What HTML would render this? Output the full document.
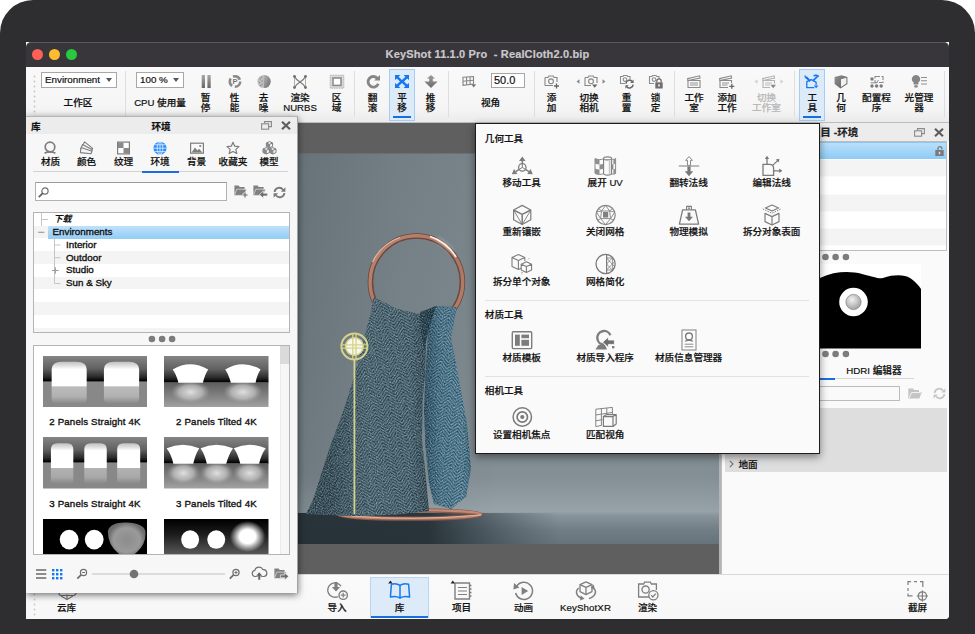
<!DOCTYPE html>
<html lang="zh-CN">
<head>
<meta charset="utf-8">
<title>KeyShot 11.1.0 Pro - RealCloth2.0.bip</title>
<style>
*{box-sizing:border-box;margin:0;padding:0}
html,body{width:975px;height:634px;overflow:hidden;background:#fff}
body{position:relative;font-family:"Liberation Sans","Noto Sans CJK SC",sans-serif;font-size:10px;color:#111;font-weight:500;-webkit-text-stroke:.2px}
.abs{position:absolute}
svg{overflow:visible}
#frame{position:absolute;left:0;top:0;width:975px;height:700px;background:#2e2e30;border-radius:33px 33px 0 0}
#screen{position:absolute;left:26px;top:42px;width:923px;height:577px;background:#fff;border-radius:0 0 4px 0;overflow:hidden}
#titlebar{position:absolute;left:0;top:0;width:923px;height:24.600px;z-index:2;background:#38353b;border-top:1px solid #5a575d;border-radius:5px 5px 0 0}
#titlebar .t{position:absolute;left:0;width:923px;top:5px;text-align:center;color:#c9c8cb;font-weight:700;font-size:11px;letter-spacing:.150px}
.tl{position:absolute;top:5.500px;width:11px;height:11px;border-radius:50%}
#toolbar{position:absolute;left:0;top:24px;width:923px;height:57px;background:linear-gradient(#f9f9f9,#f5f5f5 75%,#ebebeb);border-bottom:1px solid #bdbdbd}
.sep{position:absolute;top:5px;width:1px;height:46px;background:#dedede}
.tb{position:absolute;top:3px;height:52px;width:26px;margin-left:-13px;text-align:center;font-size:9.6px;line-height:10px;color:#111;border:1px solid transparent}
.tb .lab{position:absolute;left:-22px;right:-22px;top:23px;text-align:center;white-space:nowrap}
.tb .lab1{top:28px}
.tb svg{position:absolute;left:50%;top:5px;margin-left:-9px}
.tb.sel{background:#ddebf9;border:1px solid #a5ccf5}
.tb.sel:after{content:"";position:absolute;left:3px;right:3px;bottom:2px;height:2px;background:#1a6fe0}
.tb.dis{color:#b9b9b9}
.combo{position:absolute;top:6px;height:16px;border:1px solid #a8a8a8;background:#fff;font-size:9.8px;line-height:14px;padding-left:3px;white-space:nowrap;font-weight:400}
.combo:after{content:"";position:absolute;right:4px;top:5px;border:3.5px solid transparent;border-top:4px solid #555;border-bottom:0}
.tlab{position:absolute;top:31px;font-size:9.6px;line-height:12px;white-space:nowrap;transform:translateX(-50%)}
.bb{position:absolute;top:2px;height:41px;width:59px;margin-left:-29.500px;border:1px solid transparent;font-size:9.6px;line-height:12px}
.bb .lab{position:absolute;left:-10px;right:-10px;top:24.500px;text-align:center;white-space:nowrap}
.bb svg{position:absolute;left:50%;top:3.300px;margin-left:-12px}
.bb.sel{background:#ddebf9;border-color:#b7d6f5}
.bb.sel:after{content:"";position:absolute;left:0;right:0;bottom:-1px;height:2px;background:#1a6fe0}
.lt{position:absolute;top:39.200px;font-size:9.6px;line-height:12px;white-space:nowrap;transform:translateX(-50%)}
.li{position:absolute;top:24px}
.tr{position:absolute;left:1px;font-size:9.8px;line-height:12.7px;height:12.7px;white-space:nowrap;font-weight:400;color:#111;-webkit-text-stroke:.35px #111}
.th{position:absolute;width:104.5px;height:51.5px;overflow:hidden}
.tn{position:absolute;font-size:9.7px;line-height:12px;white-space:nowrap;transform:translateX(-50%);font-weight:400;letter-spacing:.15px;-webkit-text-stroke:.35px #111}
.ps{position:absolute;left:9.300px;font-size:9.600px;line-height:12px;white-space:nowrap}
.pl{position:absolute;font-size:9.600px;line-height:12px;white-space:nowrap;transform:translateX(-50%)}
.pi{position:absolute;margin-left:-12px}
.psep{position:absolute;left:9.300px;width:324px;height:1px;background:#e2e2e2}
</style>
</head>
<body>
<div id="frame"></div>
<div id="screen">
  <div id="titlebar">
    <div class="tl" style="left:6px;background:#fe5f57"></div>
    <div class="tl" style="left:23px;background:#febc2e"></div>
    <div class="tl" style="left:40px;background:#28c840"></div>
    <div class="t">KeyShot 11.1.0 Pro&nbsp; - RealCloth2.0.bip</div>
  </div>
  <div id="toolbar">
    <svg class="abs" style="left:7px;top:9px" width="3" height="38"><g fill="#c4c4c4"><circle cx="1.5" cy="1.5" r="0.9"/><circle cx="1.5" cy="6.5" r="0.9"/><circle cx="1.5" cy="11.5" r="0.9"/><circle cx="1.5" cy="16.5" r="0.9"/><circle cx="1.5" cy="21.5" r="0.9"/><circle cx="1.5" cy="26.5" r="0.9"/><circle cx="1.5" cy="31.5" r="0.9"/><circle cx="1.5" cy="36.5" r="0.9"/></g></svg>
    <div class="combo" style="left:15px;width:76px">Environment</div>
    <div class="tlab" style="left:52px">工作区</div>
    <div class="sep" style="left:99px"></div>
    <div class="combo" style="left:110px;width:48px">100 %</div>
    <div class="tlab" style="left:134px">CPU 使用量</div>

    <div class="tb" style="left:179.5px"><svg width="18" height="14" viewBox="0 0 18 14"><defs><linearGradient id="gv" x1="0" y1="0" x2="0" y2="1"><stop offset="0" stop-color="#a9a9a9"/><stop offset="1" stop-color="#666"/></linearGradient></defs><rect x="4.7" y="0" width="3.3" height="13" fill="url(#gv)"/><rect x="10.4" y="0" width="3.3" height="13" fill="url(#gv)"/></svg><div class="lab">暂<br>停</div></div>

    <div class="tb" style="left:208.5px"><svg width="18" height="14" viewBox="0 0 18 14"><circle cx="9" cy="6.5" r="5.2" fill="none" stroke="#8a8a8a" stroke-width="2.6" stroke-dasharray="8.200 2.700"/><text x="9" y="9.3" font-size="7.5" font-weight="700" fill="#777" text-anchor="middle" font-family="Liberation Sans,sans-serif">P</text></svg><div class="lab">性<br>能</div></div>

    <div class="tb" style="left:237.5px"><svg width="18" height="14" viewBox="0 0 18 14"><defs><linearGradient id="gd" x1="0" y1="0" x2="1" y2="1"><stop offset="0" stop-color="#b5b5b5"/><stop offset="1" stop-color="#6a6a6a"/></linearGradient></defs><circle cx="9" cy="6.5" r="6.6" fill="#bdbdbd"/><path d="M9 -0.1 A6.6 6.6 0 0 1 9 13.1 Z" fill="url(#gd)"/><g fill="#8c8c8c"><circle cx="5" cy="4" r=".7"/><circle cx="7" cy="6" r=".7"/><circle cx="4.5" cy="7.5" r=".7"/><circle cx="7" cy="9.5" r=".7"/><circle cx="6.5" cy="2.5" r=".7"/><circle cx="5.5" cy="10.5" r=".7"/></g></svg><div class="lab">去<br>噪</div></div>

    <div class="tb" style="left:274px"><svg width="18" height="14" viewBox="0 0 18 14"><g fill="none" stroke="#7d7d7d" stroke-width="1.3"><path d="M3.5 1.5 C6 7 12 7 14.5 12.5"/><path d="M14.5 1.5 C12 7 6 7 3.5 12.5"/><path d="M3.5 1.5 V12.5 M14.5 1.5 V12.5" stroke-width=".8" stroke="#9a9a9a"/></g><g fill="#6f6f6f"><circle cx="3.5" cy="1.5" r="1.4"/><circle cx="14.5" cy="1.5" r="1.4"/><circle cx="3.5" cy="12.5" r="1.4"/><circle cx="14.5" cy="12.5" r="1.4"/></g></svg><div class="lab">渲染<br>NURBS</div></div>

    <div class="tb" style="left:310.5px"><svg width="18" height="14" viewBox="0 0 18 14"><rect x="2.2" y=".2" width="13.6" height="13" fill="#d9d9d9" stroke="#b0b0b0" stroke-width="1" stroke-dasharray="1.5 1"/><rect x="5" y="3" width="8" height="7.4" fill="#fff" stroke="#8e8e8e" stroke-width="1.6"/></svg><div class="lab">区<br>域</div></div>

    <div class="sep" style="left:328px"></div>

    <div class="tb" style="left:346.5px"><svg width="18" height="14" viewBox="0 0 18 14"><path d="M13.6 3.6 A5.3 5.3 0 1 0 14.3 8.8" fill="none" stroke="#868686" stroke-width="2.8"/><path d="M10.2 5.6 L16 5.6 L16 0 Z" fill="#868686"/></svg><div class="lab">翻<br>滚</div></div>

    <div class="tb sel" style="left:376px"><svg width="18" height="14" viewBox="0 0 18 14"><g fill="#1577f2"><path d="M2 0 H7.4 L5.6 1.8 L9 5 L12.4 1.8 L10.6 0 H16 V5 L14.2 3.4 L11 6.5 L14.2 9.6 L16 8 V13 H10.6 L12.4 11.2 L9 8 L5.6 11.2 L7.4 13 H2 V8 L3.8 9.6 L7 6.5 L3.8 3.4 L2 5 Z"/></g></svg><div class="lab">平<br>移</div></div>

    <div class="tb" style="left:404.5px"><svg width="18" height="14" viewBox="0 0 18 14"><defs><linearGradient id="gdl" x1="0" y1="0" x2="0" y2="1"><stop offset="0" stop-color="#9d9d9d"/><stop offset="1" stop-color="#6c6c6c"/></linearGradient></defs><path d="M9 0 L13.2 3.6 H10.8 V6.6 H15.6 L9 13 L2.4 6.6 H7.2 V3.6 H4.8 Z" fill="url(#gdl)"/></svg><div class="lab">推<br>移</div></div>

    <div class="sep" style="left:422px"></div>

    <svg class="abs" style="left:436px;top:10px" width="15" height="12" viewBox="0 0 15 12"><g fill="none" stroke="#858585" stroke-width="1.1"><path d="M1 1.2 L11.5 .5 V8 L1 9.3 Z"/><path d="M4.6 1 V8.8 M8.1 .8 V8.4 M1 5.2 L11.5 4.2"/></g><path d="M9.2 8.2 H14.2 L11.7 11.4 Z" fill="#777"/></svg>
    <div class="abs" style="left:465px;top:7px;width:34px;height:15px;border:1px solid #a6a6a6;background:#fff;font-size:11px;line-height:13px;padding-left:2px;font-weight:400">50.0</div>
    <div class="tlab" style="left:464.5px">视角</div>

    <div class="sep" style="left:507.5px"></div>
    <div class="tb" style="left:525.5px"><svg width="18" height="14" viewBox="0 0 18 14"><g fill="none" stroke="#858585" stroke-width="1.1"><path d="M2 2.5 H5 L5.8 1 H10.2 L11 2.5 H14 V7 M10 10.5 H2 Z"/><path d="M2 2.5 V10.5"/><circle cx="8" cy="6.3" r="2.4"/><path d="M13.5 8.5 V13.5 M11 11 H16" stroke-width="1.3" stroke="#666"/></g></svg><div class="lab">添<br>加</div></div>

    <div class="tb" style="left:563px"><svg style="margin-left:-7px" width="18" height="14" viewBox="0 0 18 14"><g fill="none" stroke="#858585" stroke-width="1.1"><path d="M3 2.5 H6 L6.8 1 H11.2 L12 2.5 H15 V8 M9 10.5 H3 V2.5"/><circle cx="9" cy="6.3" r="2.4"/></g><path d="M10 9.5 H15.4 L12.7 12.8 Z" fill="#666"/><path d="M-5.5 6.5 L-2.5 4.3 V8.7 Z M23.5 6.5 L20.5 4.3 V8.7 Z" fill="#8a8a8a"/></svg><div class="lab">切换<br>相机</div></div>

    <div class="tb" style="left:600.5px"><svg width="18" height="14" viewBox="0 0 18 14"><g fill="none" stroke="#8c8c8c" stroke-width="1.1"><path d="M7 8.5 H2.5 V1.5 H5 L5.6 .5 H9 L9.6 1.5 H12 V4"/><circle cx="7" cy="4.6" r="1.8"/></g><g fill="none" stroke="#666" stroke-width="1.5"><path d="M7.9 8.6 A3.6 3.6 0 0 1 14.2 6.4"/><path d="M15.1 9.6 A3.6 3.6 0 0 1 8.8 11.8"/></g><path d="M15.6 4.6 V8 H12.2 Z M7.4 13.6 V10.2 H10.8 Z" fill="#666"/></svg><div class="lab">重<br>置</div></div>

    <div class="tb" style="left:629.5px"><svg width="18" height="14" viewBox="0 0 18 14"><g fill="none" stroke="#8c8c8c" stroke-width="1.1"><path d="M7 8.5 H2.5 V1.5 H5 L5.6 .5 H9 L9.6 1.5 H12 V4"/><circle cx="7" cy="4.6" r="1.8"/></g><rect x="8.3" y="7.3" width="7.4" height="6.2" fill="#6e6e6e"/><path d="M9.8 7.3 V6 A2.2 2.2 0 0 1 14.2 6 V7.3" fill="none" stroke="#6e6e6e" stroke-width="1.3"/><rect x="11.3" y="9.3" width="1.4" height="2.2" fill="#fff"/></svg><div class="lab">锁<br>定</div></div>

    <div class="sep" style="left:647.5px"></div>

    <div class="tb" style="left:668px"><svg width="18" height="14" viewBox="0 0 18 14"><g fill="none" stroke="#8a8a8a" stroke-width="1.1"><path d="M3 5.5 H15 V12.5 H3 Z"/><path d="M2.6 3.6 L14.6 .8 L15 3 L3 5.5 Z"/><path d="M5 8 H13 M5 10 H13" stroke-width=".9"/></g></svg><div class="lab">工作<br>室</div></div>

    <div class="tb" style="left:701px"><svg width="18" height="14" viewBox="0 0 18 14"><g fill="none" stroke="#8a8a8a" stroke-width="1.1"><path d="M13.5 8 V5.5 H2 V12.5 H10"/><path d="M1.6 3.6 L13.2 .8 L13.6 3 L2 5.5 Z"/><path d="M4 8 H11 M4 10 H9.5" stroke-width=".9"/><path d="M13.8 8.8 V13.8 M11.3 11.3 H16.3" stroke="#666" stroke-width="1.3"/></g></svg><div class="lab">添加<br>工作</div></div>

    <div class="tb dis" style="left:740.5px"><svg style="margin-left:-7px" width="18" height="14" viewBox="0 0 18 14"><g fill="none" stroke="#b3b3b3" stroke-width="1.1"><path d="M14.5 8.5 V5.5 H3 V12.5 H10"/><path d="M2.6 3.6 L14.2 .8 L14.6 3 L3 5.5 Z"/><path d="M5 8 H12 M5 10 H10" stroke-width=".9"/></g><path d="M10.4 9.8 H16 L13.2 13.2 Z" fill="#888"/><path d="M-5.5 6.5 L-2.5 4.3 V8.7 Z M23.5 6.5 L20.5 4.3 V8.7 Z" fill="#d0d0d0"/></svg><div class="lab">切换<br>工作室</div></div>

    <div class="sep" style="left:767.5px"></div>

    <div class="tb sel" style="left:786.2px"><svg width="18" height="14" viewBox="0 0 18 14"><g fill="none" stroke="#1577f2" stroke-width="1.300" stroke-linejoin="round"><path d="M3.800 12.700 V6.600 L8.200 4.700 L13.100 7.200 V10"/><path d="M3.200 12.700 H11.300"/><path d="M3 2 L7.200 6.200" stroke-width="2"/><path d="M2 .400 L2.400 2.600 L4.600 2.800" stroke-width="1.200"/><path d="M14.300 1.600 L10 5.600" stroke-width="1.700"/><path d="M10.600 .800 Q13.500 -.300 15.800 1.600" stroke-width="1.700"/></g><path d="M10.800 10.400 H15.500 L13.100 13.200 Z" fill="#1577f2"/></svg><div class="lab">工<br>具</div></div>

    <div class="tb" style="left:815px"><svg width="18" height="14" viewBox="0 0 18 14"><defs><linearGradient id="gg" x1="0" y1="0" x2="1" y2="1"><stop offset="0" stop-color="#8f8f8f"/><stop offset="1" stop-color="#5f5f5f"/></linearGradient></defs><path d="M2.6 2 L9.5 .2 L15.4 2 V9 L8.5 13.5 L2.6 9 Z" fill="url(#gg)"/><path d="M9 4.2 L14.4 2.8 V8.6 L9 12 Z" fill="#f2f2f2"/></svg><div class="lab">几<br>何</div></div>

    <div class="tb" style="left:850.5px"><svg width="18" height="14" viewBox="0 0 18 14"><g fill="#7b7b7b"><circle cx="4" cy="4" r="1.7"/><circle cx="4" cy="11" r="1.7"/><circle cx="8.6" cy="11" r="1.7"/><circle cx="13.2" cy="11" r="1.7"/></g><g fill="none" stroke="#8a8a8a" stroke-width="1.1"><path d="M7 1.5 H15 V7.5 H7 Z" stroke-dasharray="5 1.5"/><path d="M2.5 7.8 H8.5 L10.5 5" stroke-width="1"/></g></svg><div class="lab">配置程<br>序</div></div>

    <div class="tb" style="left:893px"><svg width="18" height="14" viewBox="0 0 18 14"><path d="M6 0 A4 4 0 0 1 8.4 7.3 V9.4 H3.6 V7.3 A4 4 0 0 1 6 0 Z" fill="#858585"/><rect x="4.2" y="10.2" width="3.6" height="2.4" rx=".8" fill="#858585"/><path d="M11 2.5 H17 M11 5.8 H17 M11 9 H17" stroke="#8e8e8e" stroke-width="1.1"/></svg><div class="lab">光管理<br>器</div></div>
    <div class="sep" style="left:918px"></div>
  </div>
  <svg id="viewport" class="abs" style="left:272px;top:81px" width="424" height="451" viewBox="298 123 424 451">
    <defs>
      <linearGradient id="bgsky" x1="0" y1="153" x2="0" y2="512" gradientUnits="userSpaceOnUse"><stop offset="0" stop-color="#79858b"/><stop offset=".55" stop-color="#7d898f"/><stop offset=".9" stop-color="#838f95"/><stop offset="1" stop-color="#98a3a8"/></linearGradient>
      <linearGradient id="floorv" x1="0" y1="510" x2="0" y2="544" gradientUnits="userSpaceOnUse"><stop offset="0" stop-color="#9ca7ac"/><stop offset=".18" stop-color="#87939a"/><stop offset=".6" stop-color="#717d84"/><stop offset="1" stop-color="#67737a"/></linearGradient>
      <linearGradient id="floorh" x1="298" y1="0" x2="560" y2="0" gradientUnits="userSpaceOnUse"><stop offset="0" stop-color="#1c272e" stop-opacity=".95"/><stop offset=".5" stop-color="#1f2a31" stop-opacity=".9"/><stop offset=".75" stop-color="#2a363d" stop-opacity=".45"/><stop offset="1" stop-color="#3a464d" stop-opacity="0"/></linearGradient>
      <pattern id="hb" width="16" height="3.4" patternUnits="userSpaceOnUse" patternTransform="rotate(-14)"><rect width="16" height="3.4" fill="#1d3541"/><path d="M0 8 L8 0 M0 11.4 L8 3.4 M0 4.6 L8 -3.4 M0 1.2 L8 -6.8 M8 0 L16 8 M8 -3.4 L16 4.6 M8 3.4 L16 11.4 M8 -6.8 L16 1.2" stroke="#75909a" stroke-width="1.2" fill="none"/></pattern>
      <pattern id="hb2" width="14" height="3.4" patternUnits="userSpaceOnUse" patternTransform="rotate(10)"><rect width="14" height="3.4" fill="#1b4a63"/><path d="M0 7 L7 0 M0 10.4 L7 3.4 M0 3.6 L7 -3.4 M0 .2 L7 -6.8 M7 0 L14 7 M7 -3.4 L14 3.6 M7 3.4 L14 10.4 M7 -6.8 L14 .2" stroke="#80a5b6" stroke-width="1.15" fill="none"/></pattern>
      <linearGradient id="shl" x1="330" y1="0" x2="430" y2="0" gradientUnits="userSpaceOnUse"><stop offset="0" stop-color="#0d1a22" stop-opacity=".45"/><stop offset=".4" stop-color="#3a4a52" stop-opacity=".18"/><stop offset=".8" stop-color="#0d1a22" stop-opacity=".1"/><stop offset="1" stop-color="#07141c" stop-opacity=".5"/></linearGradient>
      <linearGradient id="shr" x1="425" y1="0" x2="472" y2="0" gradientUnits="userSpaceOnUse"><stop offset="0" stop-color="#06202e" stop-opacity=".55"/><stop offset=".35" stop-color="#0c3045" stop-opacity=".1"/><stop offset=".8" stop-color="#0c3045" stop-opacity="0"/><stop offset="1" stop-color="#06202e" stop-opacity=".35"/></linearGradient>
      <linearGradient id="copper" x1="0" y1="0" x2="1" y2="1"><stop offset="0" stop-color="#bb8975"/><stop offset=".5" stop-color="#a87563"/><stop offset="1" stop-color="#b5806d"/></linearGradient>
      <filter id="noise" x="0" y="0" width="100%" height="100%"><feTurbulence type="fractalNoise" baseFrequency="0.85" numOctaves="2" seed="3" result="t"/><feColorMatrix type="matrix" values="0 0 0 0 .75  0 0 0 0 .85  0 0 0 0 .9  1.6 0 0 0 -.62"/></filter>
      <filter id="noised" x="0" y="0" width="100%" height="100%"><feTurbulence type="fractalNoise" baseFrequency="0.9" numOctaves="2" seed="8"/><feColorMatrix type="matrix" values="0 0 0 0 .03  0 0 0 0 .08  0 0 0 0 .12  0 1.8 0 0 -.7"/></filter>
      <clipPath id="clothclip"><path d="M373.5 297 L397 309 L420 314 L436 306 L430 322 L426 340 L425 374 L422.500 400 L422 440 L425.5 475 L429 511 L392 515 L352 516 L306 514 L313 500 L330 447 L343 412 L352 384 L366 331 L371 311 Z"/><path d="M429 320 L436 306 L457 307 L454 322 L451 338 L458 374 L467 424 L471 468 L466 497 L451 509 L434 504 L429 483 L425.5 446 L424 410 L425.5 374 Z"/></clipPath>
      <filter id="glow" x="-50%" y="-50%" width="200%" height="200%"><feGaussianBlur stdDeviation="2"/></filter>
      <linearGradient id="vig" x1="298" y1="0" x2="498" y2="0" gradientUnits="userSpaceOnUse"><stop offset="0" stop-color="#39444a" stop-opacity=".28"/><stop offset=".5" stop-color="#39444a" stop-opacity=".1"/><stop offset="1" stop-color="#39444a" stop-opacity="0"/></linearGradient>
      <clipPath id="imgclip"><rect x="298" y="153.5" width="422" height="390.5"/></clipPath>
    </defs>
    <rect x="298" y="123" width="424" height="451" fill="#5f5f5f"/>
    <g clip-path="url(#imgclip)">
      <rect x="298" y="153" width="422" height="360" fill="url(#bgsky)"/>
      <rect x="298" y="511" width="422" height="34" fill="url(#floorv)"/>
      <rect x="298" y="513" width="422" height="32" fill="url(#floorh)"/>
      <rect x="298" y="153" width="200" height="392" fill="url(#vig)"/>
      <!-- ring -->
      <circle cx="416.400" cy="282" r="46" fill="none" stroke="#6f4538" stroke-width="5.600"/>
      <circle cx="416.400" cy="282" r="46.300" fill="none" stroke="url(#copper)" stroke-width="3.400"/>
      <path d="M372.500 262 A46.800 46.800 0 0 1 400 237.500" fill="none" stroke="#e9c6b6" stroke-width="1.300" opacity=".85"/>
      <path d="M430 236.500 A47.500 47.500 0 0 1 456 257" fill="none" stroke="#fff3ec" stroke-width="1.800" opacity=".95"/>
      <path d="M436 239 A47 47 0 0 1 452 252" fill="none" stroke="#fff" stroke-width="4" opacity=".35" filter="url(#glow)"/>
      <!-- base ring -->
      <ellipse cx="410" cy="514.500" rx="71" ry="4.200" fill="none" stroke="#8a5645" stroke-width="4.200"/><ellipse cx="410" cy="514.300" rx="71" ry="4.200" fill="none" stroke="#c08a76" stroke-width="2.200"/>
      <path d="M352 516 Q410 521 481 515" fill="none" stroke="#e7c2b2" stroke-width="1" opacity=".8"/>
      <!-- right drape -->
      <path d="M429 320 L436 306 L457 307 L454 322 L451 338 L458 374 L467 424 L471 468 L466 497 L451 509 L434 504 L429 483 L425.5 446 L424 410 L425.5 374 Z" fill="url(#hb2)"/>
      <path d="M429 320 L436 306 L457 307 L454 322 L451 338 L458 374 L467 424 L471 468 L466 497 L451 509 L434 504 L429 483 L425.5 446 L424 410 L425.5 374 Z" fill="url(#shr)"/>
      <!-- left drape -->
      <path d="M373.5 297 L397 309 L420 314 L436 306 L430 322 L426 340 L425 374 L422.500 400 L422 440 L425.5 475 L429 511 L392 515 L352 516 L306 514 L313 500 L330 447 L343 412 L352 384 L366 331 L371 311 Z" fill="url(#hb)"/>
      <path d="M373.5 297 L397 309 L420 314 L436 306 L430 322 L426 340 L425 374 L422.500 400 L422 440 L425.5 475 L429 511 L392 515 L352 516 L306 514 L313 500 L330 447 L343 412 L352 384 L366 331 L371 311 Z" fill="url(#shl)"/>
      <path d="M420 312 L436 306 L430 326 L424 350 L421 330 Z" fill="#0a2230" opacity=".55"/>
      <g clip-path="url(#clothclip)"><rect x="300" y="295" width="180" height="225" filter="url(#noise)" opacity=".55"/><rect x="300" y="295" width="180" height="225" filter="url(#noised)" opacity=".6"/></g>
      <!-- floor reflection -->
      
      <!-- gizmo -->
      <g stroke="#d5d38a" fill="none">
        <path d="M354.400 359 V514" stroke-width="1.800"/>
        <circle cx="354.400" cy="346.500" r="13" stroke-width="2"/>
        <circle cx="354.400" cy="346.500" r="8.800" fill="#f7f7ec" stroke-width="1.600"/>
        <path d="M352.800 333 V360 M356 333 V360 M341 344.900 H368 M341 348.100 H368" stroke-width="1.300"/>
      </g>
    </g>
    <rect x="719" y="123" width="3" height="451" fill="#b4b4b4"/>
  </svg>
  <div id="rightpanel" class="abs" style="left:695px;top:81px;width:228px;height:451px;background:#fafafa">
    <div class="abs" style="left:0;top:0;width:228px;height:18px;background:#ececec"></div><div class="abs" style="left:0;top:0;width:1px;height:451px;background:#bdbdbd"></div>
    <div class="abs" style="left:0;top:3px;width:226px;text-align:center;font-size:10.5px;line-height:13px;font-weight:700;color:#222">项目 -环境</div>
    <svg class="abs" style="left:193px;top:4.5px" width="11" height="9" viewBox="0 0 11 9"><g fill="none" stroke="#8a8a8a" stroke-width="1.1"><path d="M3.5 2.5 V.6 H10.4 V5.6 H8"/><rect x=".6" y="2.8" width="7" height="5.4" fill="#ececec"/></g></svg>
    <svg class="abs" style="left:212.5px;top:4.5px" width="10" height="9" viewBox="0 0 10 9"><path d="M1 .8 L9 8.2 M9 .8 L1 8.2" stroke="#5d5d5d" stroke-width="2.2"/></svg>
    <div class="abs" style="left:0;top:18px;width:226px;height:110px;border:1px solid #bdbdbd;background:repeating-linear-gradient(#fff 0,#fff 17.2px,#f4f4f4 17.2px,#f4f4f4 34.4px);background-position:0 0.5px"></div>
    <div class="abs" style="left:1px;top:19px;width:224px;height:17px;background:linear-gradient(#b9dffa,#8ecbf6);border-top:1px solid #8fc4ee"></div>
    <svg class="abs" style="left:214px;top:22.5px" width="9" height="10" viewBox="0 0 9 10"><rect x=".3" y="4" width="8.4" height="6" fill="#7a7a7a"/><path d="M3 4 V2.6 A1.9 1.9 0 0 1 6.8 2.6 V3.2" fill="none" stroke="#7a7a7a" stroke-width="1.3"/><rect x="3.8" y="5.8" width="1.4" height="2.4" fill="#d8e9f6"/></svg>
    <svg class="abs" style="left:100px;top:130px" width="30" height="8" viewBox="0 0 30 8"><g fill="#7c7c7c"><circle cx="4.5" cy="4" r="3.3"/><circle cx="14.6" cy="4" r="3.3"/><circle cx="24.9" cy="4" r="3.3"/></g></svg>
    <svg class="abs" style="left:28.5px;top:140.5px" width="171" height="84.5" viewBox="0 0 171 84.5"><rect width="171" height="84.5" fill="#fff"/><path d="M0 16 C20 14 50 16 70 14 C85 7 100 7 112 10 C125 13 128 15 133 14 C145 10 155 11 160 14 C166 18 169 22 171 25 V84.5 H0 Z" fill="#000"/><circle cx="103.5" cy="38" r="14.3" fill="#fff"/><defs><radialGradient id="pin" cx=".4" cy=".35" r=".7"><stop offset="0" stop-color="#f2f2f2"/><stop offset="1" stop-color="#9c9c9c"/></radialGradient></defs><circle cx="103.5" cy="38" r="7.6" fill="url(#pin)" stroke="#8a8a8a" stroke-width=".8"/></svg>
    <svg class="abs" style="left:100px;top:227px" width="30" height="8" viewBox="0 0 30 8"><g fill="#7c7c7c"><circle cx="4.5" cy="4" r="3.3"/><circle cx="14.6" cy="4" r="3.3"/><circle cx="24.9" cy="4" r="3.3"/></g></svg>
    <div class="abs" style="left:36px;top:255px;width:156.5px;height:1px;background:#d6d6d6"></div>
    <div class="abs" style="left:36px;top:254.5px;width:78px;height:2px;background:#1a6fe0"></div>
    <div class="abs" style="left:61px;top:240px;font-size:10.5px;line-height:13px;white-space:nowrap;transform:translateX(-50%)">设置</div>
    <div class="abs" style="left:153px;top:240.500px;font-size:9.700px;line-height:13px;white-space:nowrap;transform:translateX(-50%)">HDRI 编辑器</div>
    <div class="abs" style="left:8px;top:262.5px;width:170.5px;height:15px;border:1px solid #bcbcbc;background:#fafafa"></div>
    <svg class="abs" style="left:187px;top:264.5px" width="14" height="11" viewBox="0 0 14 11"><path d="M.3 10.6 V.6 H5 L6.2 2 H11 V4 H13.8 L11.4 10.6 Z" fill="#c4c4c4"/><path d="M1.3 10 L3.4 4.6 H12.8" fill="none" stroke="#f8f8f8" stroke-width=".9"/></svg>
    <svg class="abs" style="left:211.5px;top:264.5px" width="13" height="11" viewBox="0 0 13 11"><g fill="none" stroke="#c6c6c6" stroke-width="1.7"><path d="M1.6 5 A4.6 4.6 0 0 1 10 2.8"/><path d="M11.4 6 A4.6 4.6 0 0 1 3 8.2"/></g><path d="M12.4 .4 V4.6 H8.2 Z M.6 10.6 V6.4 H4.8 Z" fill="#c6c6c6"/></svg>
    <div class="abs" style="left:3.500px;top:285px;width:222.500px;height:64px;background:#dedede"></div>
    <svg class="abs" style="left:8px;top:337px" width="5" height="8" viewBox="0 0 5 8"><path d="M.8 .8 L4 4 L.8 7.2" fill="none" stroke="#777" stroke-width="1.2"/></svg>
    <div class="abs" style="left:17.500px;top:334.500px;font-size:9.600px;line-height:13px;white-space:nowrap">地面</div>
  </div>
  <div id="bottombar" class="abs" style="left:0;top:531.500px;width:923px;height:45.500px;background:linear-gradient(#fafafa,#f7f7f7);border-top:1px solid #d9d9d9">
    <svg class="abs" style="left:7px;top:8px" width="3" height="33"><g fill="#c9c9c9"><circle cx="1.5" cy="1.5" r=".9"/><circle cx="1.5" cy="6.5" r=".9"/><circle cx="1.5" cy="11.5" r=".9"/><circle cx="1.5" cy="16.5" r=".9"/><circle cx="1.5" cy="21.5" r=".9"/><circle cx="1.5" cy="26.5" r=".9"/><circle cx="1.5" cy="31.5" r=".9"/></g></svg>
    <div class="bb" style="left:40.5px"><svg width="24" height="20" viewBox="0 0 24 20"><g fill="none" stroke="#7a7a7a" stroke-width="1.2"><path d="M6 9 A5 5 0 0 1 15 7 A4 4 0 0 1 19 14.5 H5.5 A3 3 0 0 1 6 9 Z"/><path d="M6 15 L12 18.5 L18 15 M12 18.5 V13.5"/></g></svg><div class="lab">云库</div></div>
    <div class="bb" style="left:311px"><svg width="24" height="20" viewBox="0 0 24 20"><g fill="none" stroke="#7f7f7f" stroke-width="1.4"><path d="M16 5.2 A7.2 7.2 0 1 0 13 15.6"/><circle cx="18.2" cy="14.2" r="4.2" fill="#f8f8f8"/><path d="M18.2 11.8 V16.6 M15.8 14.2 H20.6" stroke-width="1.2"/></g><path d="M9.4 1 H12.6 V6 H15.2 L11 10.4 L6.8 6 H9.4 Z" fill="#7f7f7f"/></svg><div class="lab">导入</div></div>
    <div class="bb sel" style="left:373.5px"><svg width="24" height="20" viewBox="0 0 24 20"><g fill="none" stroke="#1577f2" stroke-width="1.5" stroke-linejoin="round"><path d="M12 4.4 C9.5 2.6 6 2.4 3.4 3.2 L2.4 16 C5.6 15.2 9.4 15.4 12 17 C14.6 15.4 18.4 15.2 21.6 16 L20.6 3.2 C18 2.4 14.5 2.6 12 4.4 Z"/><path d="M12 4.4 V17"/></g><path d="M.2 2.4 L2.4 -.4 L4.6 2.4 Z" fill="#222"/></svg><div class="lab">库</div></div>
    <div class="bb" style="left:435.5px"><svg width="24" height="20" viewBox="0 0 24 20"><g fill="none" stroke="#7f7f7f" stroke-width="1.4"><path d="M5 2 H19.5 V18 H5 Z"/><path d="M8 6.5 H17 M8 10 H17 M8 13.5 H17" stroke-width="1.2"/><path d="M19.5 4.5 H21.5 M19.5 8 H21.5 M19.5 11.5 H21.5 M19.5 15 H21.5" stroke-width="1.6"/></g><path d="M.6 2.4 L2.8 -.4 L5 2.4 Z" fill="#222"/></svg><div class="lab">项目</div></div>
    <div class="bb" style="left:497.5px"><svg width="24" height="20" viewBox="0 0 24 20"><g fill="none" stroke="#7f7f7f" stroke-width="1.5"><path d="M4.6 5.4 A8.6 8.6 0 1 1 3.6 12"/></g><path d="M2 2 L7.4 6.6 L1.4 8.6 Z" fill="#7f7f7f"/><path d="M9.6 6 L16.2 10 L9.6 14 Z" fill="#7f7f7f"/></svg><div class="lab">动画</div></div>
    <div class="bb" style="left:559.5px"><svg width="24" height="20" viewBox="0 0 24 20"><g fill="none" stroke="#7f7f7f" stroke-width="1.3" stroke-linejoin="round"><path d="M12 .8 L18 3.6 V10.6 L12 13.6 L6 10.6 V3.6 Z"/><path d="M6 3.6 L12 6.4 L18 3.6 M12 6.4 V13.6"/><path d="M4.6 7 C1 10 2 15.4 8 17.4" stroke-width="1.5"/><path d="M19.4 7 C23 10 22 15.4 15 17.6" stroke-width="1.5"/></g><path d="M6 19.6 L10.6 17.8 L6.8 14.4 Z M19.8 3.6 L20.8 8.6 L16.6 7 Z" fill="#7f7f7f"/></svg><div class="lab" style="font-size:9.700px;letter-spacing:.100px">KeyShotXR</div></div>
    <div class="bb" style="left:621.5px"><svg width="24" height="20" viewBox="0 0 24 20"><g fill="none" stroke="#7f7f7f" stroke-width="1.3"><path d="M14 16 H2.6 V3 H7.6 L8.6 1.2 H14.4 L15.4 3 H20.4 V9"/><circle cx="9.6" cy="8.6" r="3.6"/><circle cx="17.4" cy="14.2" r="4.6" fill="#f8f8f8"/><path d="M15.2 14.2 L16.8 16 L19.8 12.6" stroke-width="1.2"/></g></svg><div class="lab">渲染</div></div>
    <div class="bb" style="left:891.5px"><svg style="top:2px" width="24" height="20" viewBox="0 0 24 20"><g fill="none" stroke="#7f7f7f" stroke-width="1.2"><path d="M2 5 V1.6 H5 M8 1.6 H11 M14 1.6 H16.8 V7 M2 8 V11 M2 13.6 V15.8 H6.5"/><circle cx="16.4" cy="16" r="4.2"/><path d="M16.4 10.4 V21.4 M10.8 16 H22"/></g></svg><div class="lab">截屏</div></div>
  </div>
  <div id="library" class="abs" style="left:0;top:74px;width:272px;height:476.500px;background:#f7f7f7;box-shadow:0 2px 7px rgba(0,0,0,.55);border-right:1px solid #a2a2a2;border-top:1px solid #b5b5b5">
    <div class="abs" style="left:0;top:0;width:271px;height:17px;background:#ececec"></div>
    <div class="abs" style="left:5px;top:3px;font-size:9.6px;line-height:13px;font-weight:700">库</div>
    <div class="abs" style="left:135px;top:3px;font-size:9.6px;line-height:13px;font-weight:700;transform:translateX(-50%)">环境</div>
    <svg class="abs" style="left:235px;top:4px" width="11" height="9" viewBox="0 0 11 9"><g fill="none" stroke="#8a8a8a" stroke-width="1.1"><path d="M3.5 2.5 V.6 H10.4 V5.6 H8"/><rect x=".6" y="2.8" width="7" height="5.4" fill="#ececec"/></g></svg>
    <svg class="abs" style="left:254.5px;top:4px" width="10" height="9" viewBox="0 0 10 9"><path d="M1 .8 L9 8.2 M9 .8 L1 8.2" stroke="#5d5d5d" stroke-width="2.2"/></svg>
    <!-- tabs -->
    <svg class="li" style="left:17px" width="14" height="14" viewBox="0 0 14 14"><circle cx="7" cy="6" r="4.8" fill="none" stroke="#7d7d7d" stroke-width="1.7"/><path d="M1.6 12.2 C4 10.6 10 10.6 12.4 12.2" fill="none" stroke="#7d7d7d" stroke-width="1.7"/></svg>
    <div class="lt" style="left:24.5px">材质</div>
    <svg class="li" style="left:53px" width="15" height="14" viewBox="0 0 15 14"><g fill="#f4f4f4" stroke="#7d7d7d" stroke-width="1.1" stroke-linejoin="round"><path d="M5.6 .8 L13.6 7.4 L11 10.6 L2 7.8 Z"/><path d="M3.4 3.6 L13.4 8.8 L11.4 11.6 L1.6 9.6 Z"/><path d="M2 6.6 L13 10.2 L12 12.8 L1.4 11.6 Z"/></g></svg>
    <div class="lt" style="left:60.5px">颜色</div>
    <svg class="li" style="left:91px" width="13" height="14" viewBox="0 0 13 14"><rect x=".6" y="1.1" width="11.8" height="11.8" fill="#fff" stroke="#7d7d7d" stroke-width="1.2"/><rect x="1" y="1.5" width="5.5" height="5.5" fill="#8a8a8a"/><rect x="6.5" y="7" width="5.5" height="5.5" fill="#8a8a8a"/></svg>
    <div class="lt" style="left:97.5px">纹理</div>
    <svg class="li" style="left:126.5px" width="14" height="14" viewBox="0 0 14 14"><circle cx="7" cy="7.2" r="6.5" fill="#2b8cfb"/><g fill="none" stroke="#eaf3ff" stroke-width=".8"><ellipse cx="7" cy="7.2" rx="2.8" ry="6.5"/><path d="M7 .7 V13.7 M.5 7.2 H13.5 M1.5 3.8 H12.5 M1.5 10.6 H12.5"/></g></svg>
    <div class="lt" style="left:134px">环境</div>
    <svg class="li" style="left:163.5px" width="14" height="14" viewBox="0 0 14 14"><rect x=".6" y="2.2" width="12.8" height="10" fill="#fafafa" stroke="#7d7d7d" stroke-width="1.2"/><path d="M1.6 11.4 L5 6.4 L7.4 9.4 L9 7.8 L12.4 11.4 Z" fill="#7d7d7d"/><circle cx="10.2" cy="5" r="1.1" fill="#7d7d7d"/></svg>
    <div class="lt" style="left:170.5px">背景</div>
    <svg class="li" style="left:200px" width="14" height="14" viewBox="0 0 14 14"><path d="M7 1.2 L8.7 5.2 L13 5.6 L9.8 8.4 L10.8 12.6 L7 10.4 L3.2 12.6 L4.2 8.4 L1 5.6 L5.3 5.2 Z" fill="none" stroke="#7d7d7d" stroke-width="1.2" stroke-linejoin="round"/></svg>
    <div class="lt" style="left:207px">收藏夹</div>
    <svg class="li" style="left:236px" width="15" height="14" viewBox="0 0 15 14"><g fill="#f4f4f4" stroke="#7d7d7d" stroke-width="1" stroke-linejoin="round"><path d="M7.5 .6 L10.6 2 V5.4 L7.5 6.8 L4.4 5.4 V2 Z M4.4 2 L7.5 3.4 L10.6 2 M7.5 3.4 V6.8"/><path d="M4.2 6.6 L7.4 8 V11.6 L4.2 13 L1 11.6 V8 Z M1 8 L4.2 9.4 L7.4 8 M4.2 9.4 V13"/><path d="M10.8 6.6 L14 8 V11.6 L10.8 13 L7.6 11.6 V8 Z M7.6 8 L10.8 9.4 L14 8 M10.8 9.4 V13"/></g><path d="M4.4 2 L7.5 3.4 V6.8 L4.4 5.4 Z M1 8 L4.2 9.4 V13 L1 11.6 Z M7.6 8 L10.8 9.4 V13 L7.6 11.6 Z" fill="#8a8a8a"/></svg>
    <div class="lt" style="left:243px">模型</div>
    <div class="abs" style="left:6.5px;top:54px;width:255.5px;height:1px;background:#d2d2d2"></div>
    <div class="abs" style="left:116px;top:53.5px;width:36.6px;height:2px;background:#1a6fe0"></div>
    <!-- search -->
    <div class="abs" style="left:9px;top:65px;width:192px;height:19px;border:1px solid #b1b1b1;border-top-color:#9a9a9a;background:#fff"></div>
    <svg class="abs" style="left:12px;top:69.5px" width="11" height="11" viewBox="0 0 11 11"><circle cx="7" cy="4" r="3.1" fill="none" stroke="#707070" stroke-width="1.2"/><path d="M4.8 6.2 L.8 10.2" stroke="#606060" stroke-width="1.8"/></svg>
    <svg class="abs" style="left:208px;top:68px" width="14" height="13" viewBox="0 0 14 13"><path d="M.4 10.4 V.6 H4.6 L5.8 2 H10.6 V4" fill="#808080"/><path d="M.4 10.4 L2.8 4.2 H12.6 L10 10.4 Z" fill="#808080" stroke="#f4f4f4" stroke-width=".6"/><path d="M11 7.2 V12.8 M8.2 10 H13.8" stroke="#f4f4f4" stroke-width="2.6"/><path d="M11 7.6 V12.6 M8.6 10 H13.6" stroke="#6d6d6d" stroke-width="1.2"/></svg>
    <svg class="abs" style="left:227px;top:68px" width="15" height="13" viewBox="0 0 15 13"><path d="M.4 10.4 V.6 H4.6 L5.8 2 H10.6 V4" fill="#808080"/><path d="M.4 10.4 L2.8 4.2 H12.6 L10 10.4 Z" fill="#808080" stroke="#f4f4f4" stroke-width=".6"/><path d="M6.4 9.6 L10.4 6 V8.2 H14.6 V11 H10.4 V13.2 Z" fill="#6d6d6d" stroke="#f4f4f4" stroke-width=".7"/></svg>
    <svg class="abs" style="left:247px;top:69.5px" width="13" height="11" viewBox="0 0 13 11"><g fill="none" stroke="#7a7a7a" stroke-width="1.8"><path d="M1.6 5 A4.6 4.6 0 0 1 10 2.8"/><path d="M11.4 6 A4.6 4.6 0 0 1 3 8.2"/></g><path d="M12.4 .2 V4.8 H7.8 Z M.6 10.8 V6.2 H5.2 Z" fill="#7a7a7a"/></svg>
    <!-- tree -->
    <div class="abs" style="left:7px;top:95px;width:257px;height:121px;border:1px solid #b4b4b4;background:#fff">
      <div class="abs" style="left:0;top:0;width:255px;height:119px;background:repeating-linear-gradient(#fff 0,#fff 12.750px,#f4f4f4 12.750px,#f4f4f4 25.500px);background-position:0 0"></div>
      <div class="abs" style="left:14px;top:12.800px;width:241px;height:12.800px;background:linear-gradient(#bfe1fa,#93cdf6)"></div>
      <svg class="abs" style="left:0;top:0" width="60" height="90" viewBox="34 213 60 90"><g stroke="#c6c6c6" stroke-width="1" fill="none"><path d="M41.500 213 V226 M41.500 219.500 H48"/><path d="M54.500 238.500 V283.500 H60.500 M54.500 245 H60.500 M54.500 257.700 H60.500"/><path d="M38.200 232.300 H44.400" stroke="#8c8c8c" stroke-width="1.100"/><path d="M52 270.500 H58.600 M55.300 267.200 V273.800" stroke="#999" stroke-width="1.100"/></g></svg>
      <div class="tr" style="left:19.500px;top:.300px;font-weight:700;font-style:italic;font-size:9px;-webkit-text-stroke:0">下载</div>
      <div class="tr" style="left:18.5px;top:13px">Environments</div>
      <div class="tr" style="left:32px;top:25.800px">Interior</div>
      <div class="tr" style="left:32px;top:38.500px">Outdoor</div>
      <div class="tr" style="left:32px;top:51.200px">Studio</div>
      <div class="tr" style="left:32px;top:64px">Sun &amp; Sky</div>
    </div>
    <svg class="abs" style="left:120.500px;top:217.700px" width="30" height="8" viewBox="0 0 30 8"><g fill="#7c7c7c"><circle cx="4.9" cy="4" r="3.300"/><circle cx="15.100" cy="4" r="3.300"/><circle cx="25.100" cy="4" r="3.300"/></g></svg>
    <!-- thumbnails -->
    <div class="abs" style="left:7px;top:228px;width:257px;height:210px;border:1px solid #b4b4b4;background:#fff;overflow:hidden">
      <div class="abs" style="left:245.500px;top:0;width:10px;height:208px;background:#f6f6f6;border-left:1px solid #ebebeb"></div>
      <div class="abs" style="left:245.500px;top:0;width:10px;height:17.500px;background:#dadada"></div>
      <svg width="0" height="0" style="position:absolute"><defs>
        <linearGradient id="tsky" x1="0" y1="0" x2="0" y2="1"><stop offset="0" stop-color="#858585"/><stop offset=".5" stop-color="#606060"/><stop offset=".8" stop-color="#2c2c2c"/><stop offset=".95" stop-color="#050505"/><stop offset="1" stop-color="#000"/></linearGradient>
        <linearGradient id="tfl" x1="0" y1="0" x2="0" y2="1"><stop offset="0" stop-color="#5c5c5c"/><stop offset="1" stop-color="#a2a2a2"/></linearGradient>
        <linearGradient id="trf" x1="0" y1="0" x2="0" y2="1"><stop offset="0" stop-color="#bdbdbd"/><stop offset=".6" stop-color="#b0b0b0"/><stop offset="1" stop-color="#8a8a8a"/></linearGradient>
        <radialGradient id="tbl"><stop offset="0" stop-color="#e0e0e0"/><stop offset=".6" stop-color="#bdbdbd" stop-opacity=".8"/><stop offset="1" stop-color="#9a9a9a" stop-opacity="0"/></radialGradient>
        <radialGradient id="tgb"><stop offset="0" stop-color="#8c8c8c"/><stop offset=".7" stop-color="#9a9a9a"/><stop offset="1" stop-color="#6c6c6c"/></radialGradient>
        <radialGradient id="twb"><stop offset="0" stop-color="#fff"/><stop offset=".45" stop-color="#fff"/><stop offset="1" stop-color="#fff" stop-opacity="0"/></radialGradient>
        <linearGradient id="tdk" x1="0" y1="0" x2="0" y2="1"><stop offset="0" stop-color="#000"/><stop offset=".3" stop-color="#1c1c1c"/><stop offset="1" stop-color="#8a8a8a"/></linearGradient>
        <filter id="b1"><feGaussianBlur stdDeviation=".7"/></filter><linearGradient id="tpw" x1="0" y1="0" x2="0" y2="1"><stop offset="0" stop-color="#fff" stop-opacity=".55"/><stop offset=".3" stop-color="#fff"/><stop offset="1" stop-color="#fff"/></linearGradient>
      </defs></svg>
      <svg class="th" style="left:8.800px;top:9.700px" viewBox="0 0 100 50" preserveAspectRatio="none"><rect width="100" height="25" fill="url(#tsky)"/><rect y="25" width="100" height="25" fill="#888"/><g filter="url(#b1)"><path d="M8.300 42 V29.500 H41.800 V42 Q41.800 46 36 46 H14 Q8.300 46 8.300 42 Z M58.300 42 V29.500 H92 V42 Q92 46 86 46 H64 Q58.300 46 58.300 42 Z" fill="url(#trf)"/><path d="M8.300 29.500 V13 Q8.300 5.500 18 5.500 H32 Q41.800 5.500 41.800 13 V29.500 Z M58.300 29.500 V13 Q58.300 5.500 68 5.500 H82 Q92 5.500 92 13 V29.500 Z" fill="url(#tpw)"/></g></svg>
      <svg class="th" style="left:130px;top:9.700px" viewBox="0 0 100 50" preserveAspectRatio="none"><rect width="100" height="26" fill="url(#tsky)"/><rect y="25.500" width="100" height="24.500" fill="url(#tfl)"/><ellipse cx="25.500" cy="35" rx="19" ry="11" fill="url(#tbl)"/><ellipse cx="75.500" cy="35" rx="19" ry="11" fill="url(#tbl)"/><path d="M8.300 13 Q25 3 42.300 13 Q39 18 37.200 26 H13.800 Q12 18 8.300 13 Z M58.600 13 Q75 3 92.400 13 Q89 18 87.600 26 H64 Q62 18 58.600 13 Z" fill="#fff"/></svg>
      <div class="tn" style="left:61px;top:70px">2 Panels Straight 4K</div>
      <div class="tn" style="left:182.500px;top:70px">2 Panels Tilted 4K</div>
      <svg class="th" style="left:8.800px;top:91.200px" viewBox="0 0 100 50" preserveAspectRatio="none"><rect width="100" height="25" fill="url(#tsky)"/><rect y="25" width="100" height="25" fill="#888"/><g filter="url(#b1)"><path d="M7.600 30 H29 V43 Q29 45 25 45 H11 Q7.600 45 7.600 43 Z M39.500 30 H61 V43 Q61 45 57 45 H43 Q39.500 45 39.500 43 Z M71 30 H93 V43 Q93 45 89 45 H75 Q71 45 71 43 Z" fill="url(#trf)" opacity=".8"/><path d="M7.600 30 V12 Q7.600 6 14 6 H23 Q29 6 29 12 V30 Z M39.500 30 V12 Q39.500 6 46 6 H55 Q61 6 61 12 V30 Z M71 30 V12 Q71 6 77 6 H87 Q93 6 93 12 V30 Z" fill="url(#tpw)"/></g></svg>
      <svg class="th" style="left:130px;top:91.200px" viewBox="0 0 100 50" preserveAspectRatio="none"><rect width="100" height="26" fill="url(#tsky)"/><rect y="25.500" width="100" height="24.500" fill="url(#tfl)"/><ellipse cx="18.500" cy="35" rx="16" ry="11" fill="url(#tbl)"/><ellipse cx="50.500" cy="35" rx="16" ry="11" fill="url(#tbl)"/><ellipse cx="82" cy="35" rx="16" ry="11" fill="url(#tbl)"/><path d="M2.500 11 Q18 4 33.700 11 Q30 17 28 26 H9 Q7 17 2.500 11 Z M35 11 Q50 4 66 11 Q62 17 59.500 26 H41 Q39 17 35 11 Z M66.800 11 Q82 4 97.400 11 Q93 17 91 26 H73 Q71 17 66.800 11 Z" fill="#fff"/></svg>
      <div class="tn" style="left:61px;top:151.500px">3 Panels Straight 4K</div>
      <div class="tn" style="left:182.500px;top:151.500px">3 Panels Tilted 4K</div>
      <svg class="th" style="left:8.800px;top:173px" viewBox="0 0 100 50" preserveAspectRatio="none"><rect width="100" height="50" fill="#000"/><path d="M62 12 Q64 3 80 3.500 Q96 4 98 12 Q99 24 90 32 Q82 40 76 36 Q62 28 62 12 Z" fill="url(#tgb)"/><ellipse cx="25" cy="20" rx="9" ry="9.500" fill="#fff"/><ellipse cx="49" cy="20" rx="9" ry="9.500" fill="#fff"/></svg>
      <svg class="th" style="left:130px;top:173px" viewBox="0 0 100 50" preserveAspectRatio="none"><rect width="100" height="50" fill="url(#tdk)"/><ellipse cx="80" cy="17" rx="17" ry="15" fill="url(#twb)"/><ellipse cx="25" cy="20" rx="8.600" ry="9" fill="#fff"/><ellipse cx="50" cy="20" rx="8.600" ry="9" fill="#fff"/></svg>
    </div>
    <!-- bottom tools -->
    <svg class="abs" style="left:9px;top:450.200px" width="256" height="14" viewBox="35 567.500 256 14">
      <path d="M36 570.500 H46.300 M36 574.500 H46.300 M36 578.500 H46.300" stroke="#6a6a6a" stroke-width="1.500"/>
      <g fill="#1577f2"><rect x="52" y="569.500" width="2.400" height="2.400"/><rect x="56" y="569.500" width="2.400" height="2.400"/><rect x="60" y="569.500" width="2.400" height="2.400"/><rect x="52" y="573.500" width="2.400" height="2.400"/><rect x="56" y="573.500" width="2.400" height="2.400"/><rect x="60" y="573.500" width="2.400" height="2.400"/><rect x="52" y="577.500" width="2.400" height="2.400"/><rect x="56" y="577.500" width="2.400" height="2.400"/><rect x="60" y="577.500" width="2.400" height="2.400"/></g>
      <g fill="none" stroke="#6f6f6f"><circle cx="83.500" cy="573" r="3.100" stroke-width="1.200"/><path d="M81.300 575.200 L77.300 579.200" stroke-width="1.800"/><path d="M82 573 H85" stroke-width="1"/>
      <circle cx="236" cy="573" r="3.100" stroke-width="1.200"/><path d="M233.800 575.200 L229.800 579.200" stroke-width="1.800"/><path d="M234.500 573 H237.500 M236 571.500 V574.500" stroke-width="1"/></g>
      <path d="M92 574.500 H225" stroke="#c2c2c2" stroke-width="1.200"/><circle cx="134" cy="574.500" r="4.300" fill="#737373"/>
      <g><path d="M254.500 577 A3.200 3.200 0 0 1 254.800 570.800 A4.400 4.400 0 0 1 263 570.200 A3.400 3.400 0 0 1 263.800 577 Z" fill="none" stroke="#707070" stroke-width="1.200"/><path d="M259.200 572.500 L262.600 576.400 H260.400 V580.400 H258 V576.400 H255.800 Z" fill="#606060" stroke="#f4f4f4" stroke-width=".5"/></g>
      <g><path d="M274.400 579 V569 H278.600 L279.800 570.400 H284.600 V572.400" fill="#808080"/><path d="M274.400 579 L276.800 572.600 H286.600 L284 579 Z" fill="#808080" stroke="#f4f4f4" stroke-width=".6"/><path d="M288.800 576.800 L284.600 573.200 V575.400 H280.400 V578.200 H284.600 V580.400 Z" fill="#6d6d6d" stroke="#f4f4f4" stroke-width=".7"/></g>
    </svg>
  </div>
  <div id="popup" class="abs" style="left:448.500px;top:80.500px;width:345.500px;height:331px;background:#fafafa;border:1px solid #1c1c1c;box-shadow:0 3px 8px rgba(0,0,0,.45)">
    <div class="abs" style="left:0;top:1.500px;width:0;height:0">
    <div class="ps" style="top:8px">几何工具</div>
    <!-- row 1 -->
    <svg class="pi" style="left:46.200px;top:29.500px" width="24" height="22" viewBox="0 0 24 22"><g fill="none" stroke="#7d7d7d" stroke-width="1.300"><circle cx="12.300" cy="12.400" r="3.700"/><path d="M12.300 8.700 V4.500 M9.200 14.400 L5.600 16.600 M15.400 14.400 L19 16.600" stroke-width="1.500"/><path d="M12.300 12.400 V8.700 M12.300 12.400 L9.200 14.400 M12.300 12.400 L15.400 14.400" stroke-width="1"/></g><path d="M12.300 1.400 L15.600 6 H9 Z M1.800 19.200 L4 14 L7.400 19 Z M22.800 19.200 L20.600 14 L17.200 19 Z" fill="#7d7d7d"/></svg>
    <div class="pl" style="left:46.200px;top:52.300px">移动工具</div>
    <svg class="pi" style="left:129.700px;top:29.500px" width="24" height="22" viewBox="0 0 24 22"><path d="M2 3.600 C5 5 8 5 11 3.600 V18.400 C8 19.800 5 19.800 2 18.400 Z" fill="#fafafa" stroke="#8a8a8a" stroke-width="1"/><g fill="#8f8f8f"><path d="M2 3.600 C3.500 4.300 5 4.600 6.500 4.700 V9.600 C5 9.500 3.500 9.200 2 8.600 Z"/><path d="M6.500 9.600 C8 9.600 9.500 9.300 11 8.600 V13.600 C9.500 14.200 8 14.500 6.500 14.600 Z"/><path d="M2 13.600 C3.500 14.200 5 14.500 6.500 14.600 V19.500 C5 19.400 3.500 19.100 2 18.400 Z"/></g><path d="M18 4 C20 4.600 21.500 4.400 22.600 3.600 V18.400 C21.500 19.200 20 19.400 18 18.800 Z" fill="#fafafa" stroke="#8a8a8a" stroke-width="1"/><path d="M20.400 4.500 C21.300 4.400 22 4.100 22.600 3.600 V8.600 L20.400 9.400 Z M18 9.200 L20.400 9.400 V14.400 L18 14.200 Z M20.400 14.400 L22.600 13.600 V18.400 C22 18.900 21.300 19.200 20.400 19.300 Z" fill="#8f8f8f"/><path d="M10.600 3.400 V18.600 A4 1.500 0 0 0 18.600 18.600 V3.400" fill="#fafafa" stroke="#808080" stroke-width="1.100"/><ellipse cx="14.600" cy="3.400" rx="4" ry="1.500" fill="#fafafa" stroke="#808080" stroke-width="1.100"/><path d="M16.600 5 V19" stroke="#c4c4c4" stroke-width="1.600"/></svg>
    <div class="pl" style="left:129.700px;top:52.300px">展开 UV</div>
    <svg class="pi" style="left:213.100px;top:29.500px" width="24" height="22" viewBox="0 0 24 22"><path d="M1.800 11 H22.200" stroke="#7d7d7d" stroke-width="1.200"/><path d="M12 1.600 L15.400 5.400 H13.500 V10.400 H10.500 V5.400 H8.600 Z" fill="#fafafa" stroke="#8a8a8a" stroke-width="1"/><path d="M10.400 11.600 H13.600 V16.200 H16.200 L12 21.200 L7.800 16.200 H10.400 Z" fill="#777"/></svg>
    <div class="pl" style="left:213.100px;top:52.300px">翻转法线</div>
    <svg class="pi" style="left:296.200px;top:29.500px" width="24" height="22" viewBox="0 0 24 22"><g fill="none" stroke="#7a7a7a" stroke-width="1.300"><path d="M3 9.400 H9.500 Q13.600 9.400 13.600 13.500 V20.400 H3 Z"/><path d="M7 9.400 V3 M12.400 10.600 L17.600 5.600 M13.600 15.800 H20"/></g><path d="M7 .800 L9.200 4 H4.800 Z M19.400 3.800 L18.800 7.600 L15.700 4.500 Z M22.400 15.800 L19.200 18 V13.600 Z" fill="#7a7a7a"/></svg>
    <div class="pl" style="left:296.200px;top:52.300px">编辑法线</div>
    <!-- row 2 -->
    <svg class="pi" style="left:46.200px;top:78.700px" width="24" height="22" viewBox="0 0 24 22"><g fill="none" stroke="#7d7d7d" stroke-width="1.200" stroke-linejoin="round"><path d="M12.200 1.400 L20.800 6 V15.800 L12.200 20.600 L3.600 15.800 V6 Z"/><path d="M3.600 6 L12.200 10.400 L20.800 6 M12.200 10.400 V20.600" stroke-width="1.500"/><path d="M3.600 6 L12.200 20.600 M20.800 6 L12.200 20.600" stroke-width=".900"/></g></svg>
    <div class="pl" style="left:46.200px;top:101.400px">重新镶嵌</div>
    <svg class="pi" style="left:129.700px;top:78.700px" width="24" height="22" viewBox="0 0 24 22"><g fill="none" stroke="#858585" stroke-width=".900"><circle cx="12.600" cy="11" r="9.600" stroke-width="1.200"/><path d="M12.600 1.400 L8.500 7 L3.400 8 M12.600 1.400 L16.600 7 L21.800 8 M8.500 7 H16.600 M8.500 7 L7.600 14.600 L3.400 8 M16.600 7 L17.600 14.600 L21.800 8 M7.600 14.600 H17.600 M7.600 14.600 L12.600 20.600 L17.600 14.600 M7.600 14.600 L4.600 16.600 M17.600 14.600 L20.600 16.600 M8.500 7 L5.600 4.400 M16.600 7 L19.600 4.400"/></g><rect x="10" y="8" width="5.200" height="5.600" fill="#808080"/></svg>
    <div class="pl" style="left:129.700px;top:101.400px">关闭网格</div>
    <svg class="pi" style="left:213.100px;top:78.700px" width="24" height="22" viewBox="0 0 24 22"><g fill="none" stroke="#7d7d7d" stroke-width="1.300" stroke-linejoin="round"><path d="M5.600 5.800 H18.400 L21.600 20.200 H2.400 Z"/><path d="M9.600 5.800 V2.400 H14.400 V5.800" stroke-width="1.100"/></g><rect x="11" y="3.400" width="2" height="1.600" fill="#999"/><path d="M10.600 8.600 H13.400 V12.800 H16 L12 17.200 L8 12.800 H10.600 Z" fill="#777"/></svg>
    <div class="pl" style="left:213.100px;top:101.400px">物理模拟</div>
    <svg class="pi" style="left:296.200px;top:78.700px" width="24" height="22" viewBox="0 0 24 22"><g fill="none" stroke="#7d7d7d" stroke-width="1.200" stroke-linejoin="round"><path d="M12 1 L18.600 4 L12 7 L5.400 4 Z"/><path d="M5 9.400 L12 12.600 L19 9.400 V17.600 L12 21 L5 17.600 Z M12 12.600 V21"/><path d="M2.800 5 L12 9.200 L21.200 5" stroke-dasharray="1.400 1.200" stroke-width="1"/></g></svg>
    <div class="pl" style="left:296.200px;top:101.400px">拆分对象表面</div>
    <!-- row 3 -->
    <svg class="pi" style="left:46.200px;top:127.800px" width="24" height="22" viewBox="0 0 24 22"><g fill="none" stroke="#7d7d7d" stroke-width="1.100" stroke-linejoin="round"><path d="M8.400 1.600 L14.800 4.600 V8 M12 14.800 L8.400 16.400 L2 13.400 V4.600 L8.400 1.600 M2 4.600 L8.400 7.600 L14.800 4.600 M8.400 7.600 V16.400"/><path d="M16.400 8.800 L21.600 11.200 V17 L16.400 19.400 L11.200 17 V11.200 Z M11.200 11.200 L16.400 13.600 L21.600 11.200 M16.400 13.600 V19.400" fill="#fafafa"/><path d="M18.400 6.200 L19.600 5 M12 19 V21.600" stroke-dasharray="1.200 1" stroke-width="1"/></g></svg>
    <div class="pl" style="left:46.200px;top:150.900px">拆分单个对象</div>
    <svg class="pi" style="left:129.700px;top:127.800px" width="24" height="22" viewBox="0 0 24 22"><g fill="none" stroke="#7d7d7d" stroke-width="1.300"><circle cx="12.600" cy="11" r="9.600"/><path d="M13.600 1.600 V20.400" stroke-width="1.200"/><path d="M13.600 5 H20 M13.600 17 H20 M13.600 5 L21.600 13.600 M13.600 17 L21.800 8.600 M19.600 4.600 V17.400 M13.600 11 L19.600 4.600 M13.600 11 L19.600 17.400" stroke-width=".800"/></g></svg>
    <div class="pl" style="left:129.700px;top:150.900px">网格简化</div>
    <div class="psep" style="top:174.700px"></div>
    <div class="ps" style="top:183.500px">材质工具</div>
    <svg class="pi" style="left:46.200px;top:204.400px" width="24" height="22" viewBox="0 0 24 22"><rect x="2.300" y="2.800" width="19.400" height="16.800" rx="1.200" fill="none" stroke="#7d7d7d" stroke-width="1.400"/><rect x="5" y="5.600" width="4.800" height="11.200" fill="#7d7d7d"/><rect x="11.400" y="5.600" width="7.600" height="3.600" fill="#7d7d7d"/><rect x="11.400" y="10.800" width="7.600" height="6" fill="#7d7d7d"/></svg>
    <div class="pl" style="left:46.200px;top:227.100px">材质模板</div>
    <svg class="pi" style="left:129.700px;top:204.400px" width="24" height="22" viewBox="0 0 24 22"><path d="M17.400 6.200 A6.800 6.800 0 1 0 11 15.600" fill="none" stroke="#7d7d7d" stroke-width="2.400"/><path d="M2.400 20.600 L5.600 15.800 H12 L14 20.600 Z" fill="#7d7d7d"/><path d="M9.600 13.200 L15.400 8 V11 H21.400 V15.400 H15.400 V18.400 Z" fill="#6f6f6f" stroke="#fafafa" stroke-width=".800"/><rect x="19" y="17" width="2.400" height="2.400" fill="#7d7d7d"/></svg>
    <div class="pl" style="left:129.700px;top:227.100px">材质导入程序</div>
    <svg class="pi" style="left:213.100px;top:204.400px" width="24" height="22" viewBox="0 0 24 22"><rect x="5" y="1" width="14" height="20" fill="#fdfdfd" stroke="#8a8a8a" stroke-width="1.100"/><circle cx="12" cy="7.400" r="3.400" fill="none" stroke="#7d7d7d" stroke-width="1.400"/><path d="M8 12.200 C10 11 14 11 16 12.200" fill="none" stroke="#7d7d7d" stroke-width="1.300"/><path d="M7.600 15.200 H16.400 M7.600 17.800 H16.400" stroke="#8a8a8a" stroke-width="1"/></svg>
    <div class="pl" style="left:213.100px;top:227.100px">材质信息管理器</div>
    <div class="psep" style="top:251.200px"></div>
    <div class="ps" style="top:259.500px">相机工具</div>
    <svg class="pi" style="left:46.200px;top:280.800px" width="24" height="22" viewBox="0 0 24 22"><g fill="none" stroke="#7a7a7a"><circle cx="12.300" cy="11" r="9.200" stroke-width="1.500"/><circle cx="12.300" cy="11" r="5.200" stroke-width="1.700"/></g><circle cx="12.300" cy="11" r="2.100" fill="#7a7a7a"/></svg>
    <div class="pl" style="left:46.200px;top:303.500px">设置相机焦点</div>
    <svg class="pi" style="left:129.700px;top:280.800px" width="24" height="22" viewBox="0 0 24 22"><g fill="none" stroke="#858585" stroke-width="1"><path d="M2.800 3.200 L19.400 1.400 V9 M2.800 3.200 V20.600 L8.600 19.400"/><path d="M2.800 9 L19.400 6.400 M2.800 14.800 L9.400 13.600 M8.400 2.600 V19.400 M13.800 2 V9.400"/><path d="M10.400 10.600 H20 L23.200 8.600 H13.600 Z M10.400 10.600 V20.400 H20 V10.600 M20 20.400 L23.200 18 V8.600" fill="#fafafa" stroke="#7a7a7a" stroke-width="1.200" stroke-linejoin="round"/></g></svg>
    <div class="pl" style="left:129.700px;top:303.500px">匹配视角</div>
  </div>
  </div>
</div>
</body>
</html>
